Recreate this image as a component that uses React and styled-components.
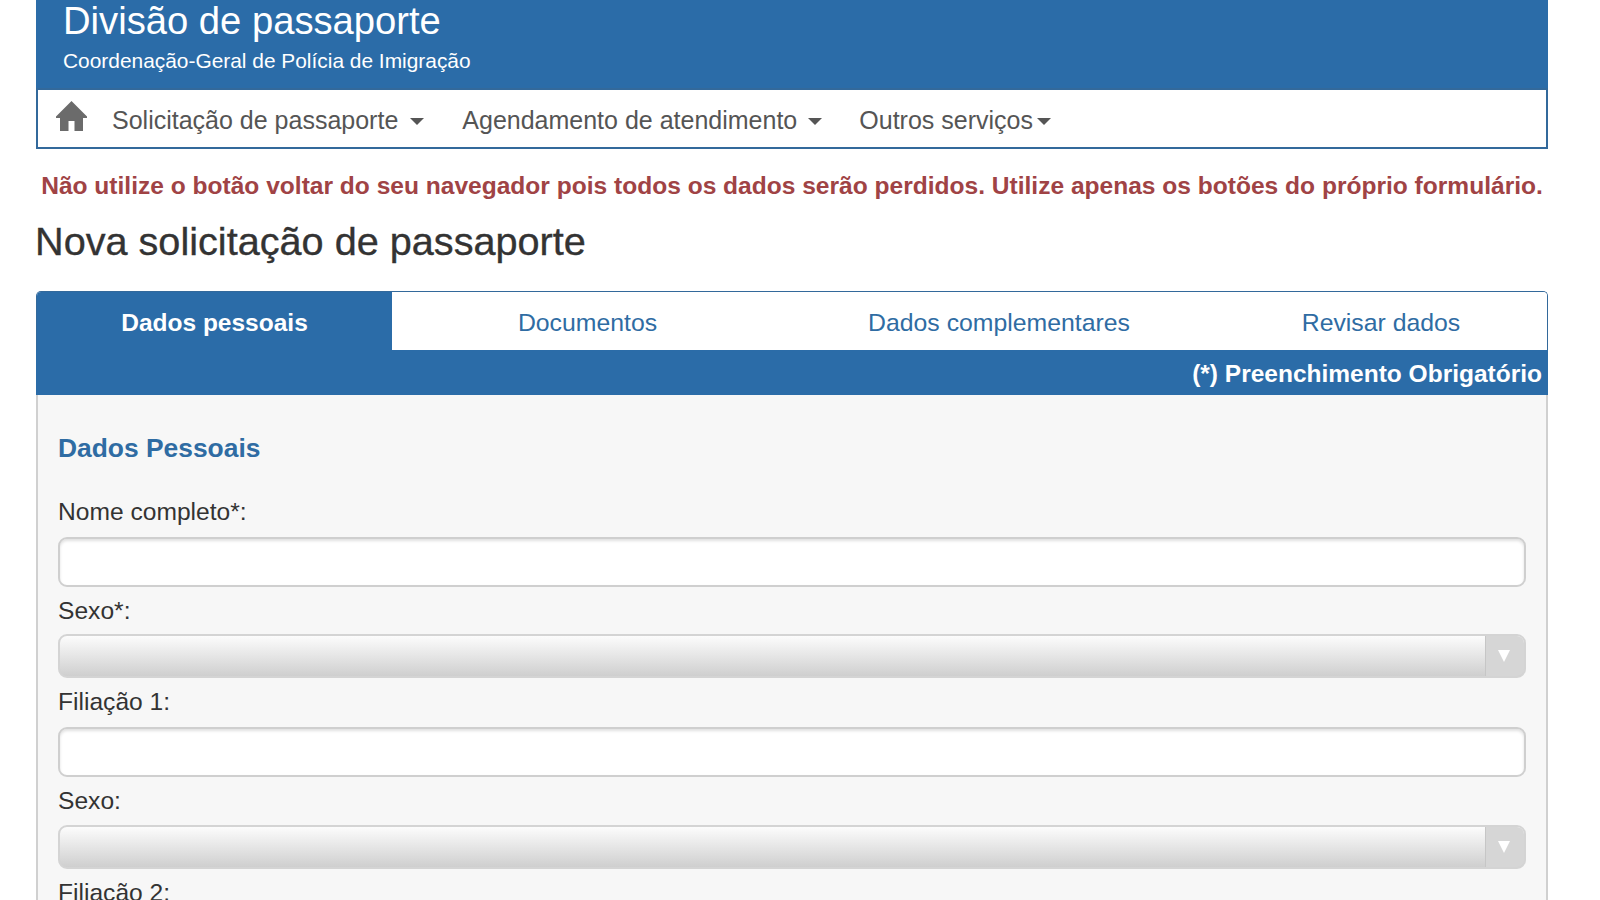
import React from "react";
import styled, { createGlobalStyle } from "styled-components";

const Global = createGlobalStyle`
  html, body { margin: 0; padding: 0; height: 900px; overflow: hidden; background: #fff; }
  body { font-family: "Liberation Sans", Arial, sans-serif; color: #333; }
  * { box-sizing: border-box; }
`;

const blue = "#2b6ca8";

const Page = styled.div`
  width: 1512px;
  margin-left: 36px;
  height: 900px;
  overflow: hidden;
`;
const Header = styled.header`
  height: 88px;
  background: ${blue};
  padding: 0 27px;
  color: #fff;
`;
const SiteTitle = styled.h1`
  margin: 0;
  padding-top: 1px;
  font-size: 38.2px;
  line-height: 40px;
  font-weight: 400;
`;
const SiteSubtitle = styled.p`
  margin: 0;
  padding-top: 9px;
  font-size: 20.9px;
  line-height: 22px;
`;
const Nav = styled.nav`
  height: 61px;
  border: 2px solid #33699b;
  display: flex;
  align-items: center;
  padding-left: 18px;
  color: #555;
  font-size: 25px;
`;
const HomeLink = styled.span`
  display: flex;
  width: 31px;
  margin-right: 25px;
  margin-top: -5px;
`;
const NavItem = styled.span`
  display: flex;
  align-items: center;
  gap: ${(p) => p.$gap}px;
  margin-right: ${(p) => p.$after}px;
  padding-top: 3px;
  white-space: nowrap;
`;
const Caret = styled.i`
  display: block;
  margin-top: 3px;
  border-style: solid;
  border-width: 7px 7px 0;
  border-color: #555 transparent transparent;
`;
const Warning = styled.p`
  margin: 0;
  padding-top: 23px;
  height: 62px;
  text-align: center;
  font-size: 24.55px;
  line-height: 27px;
  font-weight: 700;
  white-space: nowrap;
  color: #a04345;
`;
const PageTitle = styled.h2`
  margin: 0 0 0 -1px;
  height: 80px;
  font-size: 39.65px;
  line-height: 60px;
  font-weight: 400;
  color: #333;
  -webkit-text-stroke: 0.35px #333;
`;
const Tabs = styled.div`
  height: 60px;
  display: grid;
  grid-template-columns: 355px 391px 432px 1fr;
  border: 1.5px solid #33699b;
  border-bottom: 0;
  border-radius: 5px 5px 0 0;
  overflow: hidden;
`;
const Tab = styled.div`
  display: flex;
  align-items: center;
  justify-content: center;
  padding-top: 2px;
  font-size: ${(p) => (p.$active ? 24.5 : 24.8)}px;
  font-weight: ${(p) => (p.$active ? 700 : 400)};
  color: ${(p) => (p.$active ? "#fff" : "#2f6ca3")};
  background: ${(p) => (p.$active ? blue : "#fff")};
`;
const RequiredBar = styled.div`
  height: 45px;
  margin-top: -1px;
  background: ${blue};
  color: #fff;
  font-size: 24.5px;
  font-weight: 700;
  text-align: right;
  line-height: 48px;
  padding-right: 6px;
  position: relative;
`;
const Panel = styled.section`
  background: #f7f7f7;
  border: 2px solid #d0d0d0;
  border-top: 0;
  padding: 22px 20px 0;
  height: 520px;
`;
const SectionTitle = styled.h3`
  margin: 0;
  padding-top: 16px;
  height: 81px;
  font-size: 26.4px;
  line-height: 30px;
  font-weight: 700;
  color: #2f6ca3;
`;
const Label = styled.label`
  display: block;
  height: ${(p) => p.$h}px;
  font-size: 24.6px;
  line-height: 27px;
  color: #333;
`;
const Input = styled.div`
  height: 50px;
  margin-bottom: 10px;
  background: #fff;
  border: 2px solid #cfcfcf;
  border-radius: 9px;
  box-shadow: inset 0 2px 3px rgba(0, 0, 0, 0.12);
`;
const Select = styled.div`
  height: 44px;
  margin-bottom: 10px;
  display: flex;
  justify-content: flex-end;
  border: 2px solid #d4d4d4;
  border-radius: 9px;
  overflow: hidden;
  background: linear-gradient(#fcfcfc, #cfcfcf);
`;
const SelectArrow = styled.div`
  width: 39px;
  padding-right: 3px;
  background: #d6d6d6;
  border-left: 1px solid #c6c6c6;
  display: flex;
  align-items: center;
  justify-content: center;
`;
const ArrowGlyph = styled.i`
  display: block;
  border-style: solid;
  border-width: 12px 6.5px 0;
  border-color: #fff transparent transparent;
`;

const HomeIcon = () => (
  <svg width="31" height="30" viewBox="0 0 31 30" fill="#6b6b6b">
    <path d="M15.5 0 L31 15.5 V17 H27 V30 H18.5 V20 H12.5 V30 H4 V17 H0 V15.5 Z" />
  </svg>
);

const Dropdown = () => (
  <Select>
    <SelectArrow>
      <ArrowGlyph />
    </SelectArrow>
  </Select>
);

export default function App() {
  return (
    <>
      <Global />
      <Page>
        <Header>
          <SiteTitle>Divisão de passaporte</SiteTitle>
          <SiteSubtitle>Coordenação-Geral de Polícia de Imigração</SiteSubtitle>
        </Header>
        <Nav>
          <HomeLink>
            <HomeIcon />
          </HomeLink>
          <NavItem $gap={12} $after={38}>
            Solicitação de passaporte <Caret />
          </NavItem>
          <NavItem $gap={11} $after={37}>
            Agendamento de atendimento <Caret />
          </NavItem>
          <NavItem $gap={4} $after={0}>
            Outros serviços<Caret />
          </NavItem>
        </Nav>
        <Warning>
          Não utilize o botão voltar do seu navegador pois todos os dados serão perdidos. Utilize apenas os botões do próprio formulário.
        </Warning>
        <PageTitle>Nova solicitação de passaporte</PageTitle>
        <Tabs>
          <Tab $active>Dados pessoais</Tab>
          <Tab>Documentos</Tab>
          <Tab>Dados complementares</Tab>
          <Tab>Revisar dados</Tab>
        </Tabs>
        <RequiredBar>(*) Preenchimento Obrigatório</RequiredBar>
        <Panel>
          <SectionTitle>Dados Pessoais</SectionTitle>
          <Label $h={39}>Nome completo*:</Label>
          <Input />
          <Label $h={37}>Sexo*:</Label>
          <Dropdown />
          <Label $h={39}>Filiação 1:</Label>
          <Input />
          <Label $h={38}>Sexo:</Label>
          <Dropdown />
          <Label $h={27}>Filiação 2:</Label>
        </Panel>
      </Page>
    </>
  );
}
